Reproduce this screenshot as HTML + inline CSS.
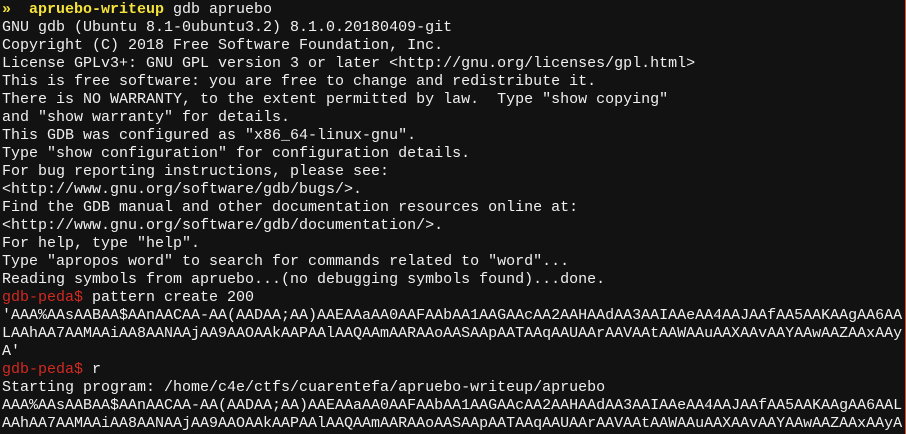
<!DOCTYPE html>
<html><head><meta charset="utf-8"><style>
html,body{margin:0;padding:0;background:#121212;width:906px;height:434px;overflow:hidden}
pre{margin:0;padding:1px 0 0 2px;font-family:"Liberation Mono",monospace;font-size:15px;line-height:18px;color:#f0f0f0;white-space:pre}
.y{color:#f5e33b;font-weight:bold}
.r{color:#d22a22}
.edge{position:absolute;right:0;top:0;width:1px;height:434px;background:#d8542a}
</style></head><body>
<pre><span class="y">»  apruebo-writeup</span> gdb apruebo
GNU gdb (Ubuntu 8.1-0ubuntu3.2) 8.1.0.20180409-git
Copyright (C) 2018 Free Software Foundation, Inc.
License GPLv3+: GNU GPL version 3 or later &lt;http://gnu.org/licenses/gpl.html&gt;
This is free software: you are free to change and redistribute it.
There is NO WARRANTY, to the extent permitted by law.  Type "show copying"
and "show warranty" for details.
This GDB was configured as "x86_64-linux-gnu".
Type "show configuration" for configuration details.
For bug reporting instructions, please see:
&lt;http://www.gnu.org/software/gdb/bugs/&gt;.
Find the GDB manual and other documentation resources online at:
&lt;http://www.gnu.org/software/gdb/documentation/&gt;.
For help, type "help".
Type "apropos word" to search for commands related to "word"...
Reading symbols from apruebo...(no debugging symbols found)...done.
<span class="r">gdb-peda$</span> pattern create 200
'AAA%AAsAABAA$AAnAACAA-AA(AADAA;AA)AAEAAaAA0AAFAAbAA1AAGAAcAA2AAHAAdAA3AAIAAeAA4AAJAAfAA5AAKAAgAA6AA
LAAhAA7AAMAAiAA8AANAAjAA9AAOAAkAAPAAlAAQAAmAARAAoAASAApAATAAqAAUAArAAVAAtAAWAAuAAXAAvAAYAAwAAZAAxAAy
A'
<span class="r">gdb-peda$</span> r
Starting program: /home/c4e/ctfs/cuarentefa/apruebo-writeup/apruebo
AAA%AAsAABAA$AAnAACAA-AA(AADAA;AA)AAEAAaAA0AAFAAbAA1AAGAAcAA2AAHAAdAA3AAIAAeAA4AAJAAfAA5AAKAAgAA6AAL
AAhAA7AAMAAiAA8AANAAjAA9AAOAAkAAPAAlAAQAAmAARAAoAASAApAATAAqAAUAArAAVAAtAAWAAuAAXAAvAAYAAwAAZAAxAAyA</pre>
<div class="edge"></div>
</body></html>
